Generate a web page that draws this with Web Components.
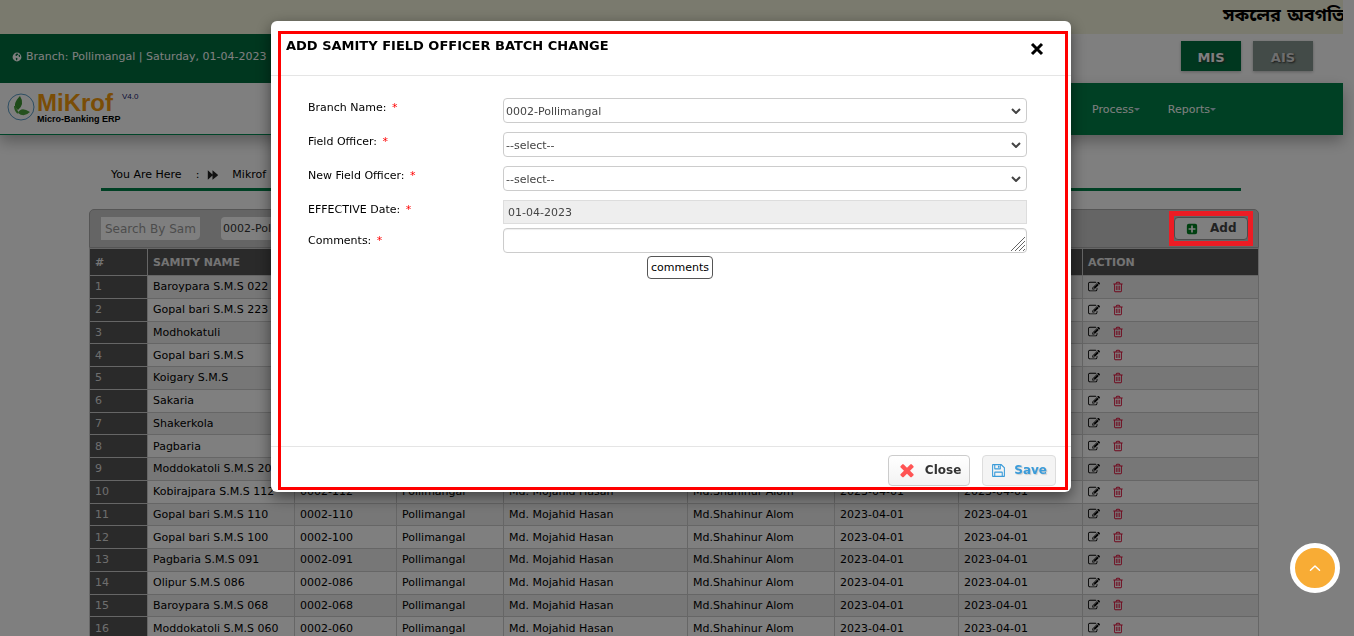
<!DOCTYPE html>
<html lang="en">
<head>
<meta charset="utf-8">
<title>MiKrof - Samity Field Officer Batch Change</title>
<style>
  html { overflow: hidden; }
  body { margin: 0; padding-right: 11px; background: #fff; color: #000;
    font: 11px/15px Verdana, "DejaVu Sans", sans-serif; }
</style>
</head>
<body>
<notice-bar>সকলের অবগতি</notice-bar>
<top-bar>Branch: Pollimangal | Saturday, 01-04-2023</top-bar>
<main-nav></main-nav>
<page-content>
  <bread-crumb slot="crumb">Mikrof</bread-crumb>
  <samity-panel></samity-panel>
</page-content>
<modal-layer>
  <modal-dialog heading="ADD SAMITY FIELD OFFICER BATCH CHANGE">
    <field-row label="Branch Name:" type="select" value="0002-Pollimangal"></field-row>
    <field-row label="Field Officer:" type="select" value="--select--"></field-row>
    <field-row label="New Field Officer:" type="select" value="--select--"></field-row>
    <field-row class="tight" label="EFFECTIVE Date:" type="date" value="01-04-2023"></field-row>
    <field-row class="area" label="Comments:" type="area" hint="comments"></field-row>
  </modal-dialog>
</modal-layer>
<scroll-top></scroll-top>

<script>
const define = (name, html, setup) => customElements.define(name, class extends HTMLElement {
  connectedCallback() {
    if (this.shadowRoot) return;
    const root = this.attachShadow({ mode: 'open' });
    root.innerHTML = typeof html === 'function' ? html(this) : html;
    if (setup) setup(root, this);
  }
});

const ICONS = {
  edit: '<path d="M888 1184l116-116-152-152-116 116v56h96v96h56zm440-720q-16-16-33 1l-350 350q-17 17-1 33t33-1l350-350q17-17 1-33zm80 594v190q0 119-84.5 203.5t-203.5 84.5h-832q-119 0-203.5-84.5t-84.5-203.5v-832q0-119 84.5-203.5t203.5-84.5h832q63 0 117 25 15 7 18 23 3 17-9 29l-49 49q-14 14-32 8-23-6-45-6h-832q-66 0-113 47t-47 113v832q0 66 47 113t113 47h832q66 0 113-47t47-113v-126q0-13 9-22l64-64q15-15 35-7t20 29zm-96-738l288 288-672 672h-288v-288zm444 132l-92 92-288-288 92-92q28-28 68-28t68 28l152 152q28 28 28 68t-28 68z"/>',
  trash: '<path d="M704 736v576q0 14-9 23t-23 9h-64q-14 0-23-9t-9-23v-576q0-14 9-23t23-9h64q14 0 23 9t9 23zm256 0v576q0 14-9 23t-23 9h-64q-14 0-23-9t-9-23v-576q0-14 9-23t23-9h64q14 0 23 9t9 23zm256 0v576q0 14-9 23t-23 9h-64q-14 0-23-9t-9-23v-576q0-14 9-23t23-9h64q14 0 23 9t9 23zm128 724v-948h-896v948q0 22 7 40.5t14.5 27 10.5 8.5h832q3 0 10.5-8.5t14.5-27 7-40.5zm-672-1076h448l-48-117q-7-9-17-11h-317q-10 2-17 11zm928 32v64q0 14-9 23t-23 9h-96v948q0 83-47 143.5t-113 60.5h-832q-66 0-113-58.5t-47-141.5v-952h-96q-14 0-23-9t-9-23v-64q0-14 9-23t23-9h309l70-167q15-37 54-63t79-26h320q40 0 79 26t54 63l70 167h309q14 0 23 9t9 23z"/>',
  times: '<path transform="translate(0 -90)" d="M1490 1322q0 40-28 68l-136 136q-28 28-68 28t-68-28l-294-294-294 294q-28 28-68 28t-68-28l-136-136q-28-28-28-68t28-68l294-294-294-294q-28-28-28-68t28-68l136-136q28-28 68-28t68 28l294 294 294-294q28-28 68-28t68 28l136 136q28 28 28 68t-28 68l-294 294 294 294q28 28 28 68z"/>',
  plus: '<path fill-rule="evenodd" d="M416 128h960q288 0 288 288v960q0 288-288 288H416q-288 0-288-288V416q0-288 288-288zM768 384v384H384v256h384v384h256v-384h384V768h-384V384z"/>',
  globe: '<circle cx="896" cy="896" r="790"/><path fill="#006e3e" d="M700 330l260-70 160 100-60 160-160 60-60 140-120-20-120-120zM1240 460l160 80 60 220-60 200-140-90-100-200zM660 1020l260 60 80 140-120 240-120 0-60-200z"/>',
  save: '<path fill-rule="evenodd" d="M224 128h1020l420 420v1020q0 96-96 96H224q-96 0-96-96V224q0-96 96-96zM256 256v1280h128v-416q0-96 96-96h832q96 0 96 96v416h128V608l-352-352v416q0 96-96 96H480q-96 0-96-96V256zM512 256v384h576V256zM512 1152v384h768v-384zM832 320h192v256H832z"/>',
  forward: '<path d="M120 200l700 620V200l800 640v112l-800 640V972l-700 620z"/>',
  up: '<path fill="none" stroke="currentColor" stroke-width="220" stroke-linecap="round" stroke-linejoin="round" d="M220 1240l676-640 676 640"/>'
};
define('ui-icon', el => `<style>
  :host { display: inline-block; width: 12px; height: 12px; flex: none; }
  svg { display: block; width: 100%; height: 100%; fill: currentColor; }
</style><svg viewBox="0 0 1792 1792" aria-hidden="true">${ICONS[el.getAttribute('name')]}</svg>`);

define('notice-bar', `<style>
  :host { display: flex; justify-content: flex-end; height: 34px; background: #f5f5dc; overflow: hidden; }
  p { margin: 0; width: 120px; white-space: nowrap; font: bold 18px/30px Verdana, "DejaVu Sans", "Noto Sans Bengali", sans-serif; }
</style><p><slot></slot></p>`);

define('top-bar', `<style>
  :host { display: flex; height: 49px; }
  .info { flex: 1; display: flex; align-items: center; gap: 4px; padding: 0 12px 4px; background: #006e3e; color: #fff; }
  ui-icon { width: 10px; height: 10px; }
  .modes { flex: 1; display: flex; justify-content: flex-end; gap: 12px; padding: 7px 30px 0 0; }
  button { width: 60px; height: 30px; border: 0; padding: 2px 0 0; background: #006e3e; color: #fff;
    font: bold 13px/15px Verdana, "DejaVu Sans", sans-serif; text-shadow: 1px 1px 2px #333; box-shadow: 0 1px 3px #bbb; }
  .off { background: #869790; color: #ddd; }
</style><div class="info"><ui-icon name="globe"></ui-icon><span><slot></slot></span></div>
<div class="modes"><button>MIS</button><button class="off">AIS</button></div>`);

define('main-nav', `<style>
  :host { display: flex; height: 52px; box-shadow: 0 6px 14px rgba(0,0,0,.3); }
  .brand { flex: 1; display: flex; padding: 8px 7px 0; border-bottom: 1px solid #008a52; background: #fff; }
  .brand svg { width: 28px; height: 30px; margin: 1px 2px 0 0; }
  .name { width: 79px; white-space: nowrap; font: bold 24px/24px "Liberation Sans", sans-serif; color: #f59a0c; }
  .name small { display: block; font-size: 9px; line-height: 9px; color: #000; }
  sup { margin-left: 6px; font: 8px/12px "Liberation Sans", sans-serif; color: #20206e; }
  nav { flex: 2; display: flex; justify-content: flex-end; align-items: center; gap: 28px; padding-right: 127px; background: #008148; }
  a { color: #fff; text-decoration: none; display: flex; align-items: center; }
  a::after { content: ""; border: 3px solid transparent; border-top-color: #b5d0e0; border-bottom: 0; }
</style>
<div class="brand">
  <svg viewBox="0 0 28 30"><circle cx="14" cy="15" r="13" fill="none" stroke="#5b9cc5"/>
    <path d="M13 4Q4 13 11 18Q18 12 13 4z" fill="#3d9432"/><path d="M11 21Q14 14 23 20Q17 26 11 21z" fill="#4ca33d"/><path d="M8 14Q8 18 11 21" fill="none" stroke="#4ca33d" stroke-width="2"/></svg>
  <div class="name">MiKrof<small>Micro-Banking ERP</small></div><sup>V4.0</sup>
</div>
<nav><a href="#process">Process</a><a href="#reports">Reports</a></nav>`);

define('page-content', `<style>
  :host { display: block; max-width: 1171px; margin: 0 auto; padding-top: 29px; }
</style><slot name="crumb"></slot><slot></slot>`);

define('bread-crumb', `<style>
  :host { display: flex; align-items: center; margin: 0 16px 18px 15px; padding: 0 10px 3px; height: 21px; border-bottom: 3px solid #008148; line-height: 21px; }
  .sep { margin: 0 8px 0 14px; }
  ui-icon { margin-right: 13px; color: #222; }
</style><span>You Are Here</span><span class="sep">:</span><ui-icon name="forward"></ui-icon><slot></slot>`);

const NAMES = ['Baroypara S.M.S 022','Gopal bari S.M.S 223','Modhokatuli','Gopal bari S.M.S','Koigary S.M.S','Sakaria','Shakerkola','Pagbaria','Moddokatoli S.M.S 201','Kobirajpara S.M.S 112','Gopal bari S.M.S 110','Gopal bari S.M.S 100','Pagbaria S.M.S 091','Olipur S.M.S 086','Baroypara S.M.S 068','Moddokatoli S.M.S 060'];
const CODES = ['022','223','222','221','220','219','218','217','201','112','110','100','091','086','068','060'];
const rowHtml = (name, i) => `<tr><th scope="row">${i + 1}</th><td>${name}</td><td>0002-${CODES[i]}</td><td>Pollimangal</td>
  <td>Md. Mojahid Hasan</td><td>Md.Shahinur Alom</td><td>2023-04-01</td><td>2023-04-01</td>
  <td><div class="act"><a href="#edit" aria-label="Edit"><ui-icon name="edit"></ui-icon></a><a class="del" href="#delete" aria-label="Delete"><ui-icon name="trash"></ui-icon></a></div></td></tr>`;

define('samity-panel', `<style>
  :host { display: block; margin: 0 -2px 0 3px; }
  .bar { display: flex; align-items: center; height: 37px; padding: 0 10px 0 11px; background: #cbcbcb; border: 1px solid #aaa; border-radius: 5px 5px 0 0; }
  input, select { box-sizing: border-box; height: 23px; border: 0; border-radius: 4px; background: #fff; font: 11px/15px Verdana, "DejaVu Sans", sans-serif; color: #333; }
  input { width: 99px; margin-right: 21px; padding: 0 4px; font-size: 12px; border-radius: 0 0 5px 0; }
  input::placeholder { color: #999; }
  select { width: 150px; padding: 0 2px; appearance: none; }
  add-button { margin-left: auto; }
  table { width: 100%; height: 392px; table-layout: fixed; border-collapse: collapse; border: 1px solid #ccc; }
  th, td { border: 1px solid #ccc; padding: 3px 5px; text-align: left; white-space: nowrap; font-weight: normal; }
  thead th { height: 20px; background: #545454; color: #e8e8e8; font-weight: bold; }
  tbody th { background: #545454; color: #ddd; }
  tbody tr:nth-child(odd) td { background: #efefef; }
  .act { display: flex; gap: 12px; height: 15px; align-items: center; }
  a { display: block; height: 12px; color: #000; } .del { color: #e0103a; }
</style>
<div class="bar"><input type="text" placeholder="Search By Samity" aria-label="Search By Samity"><select aria-label="Branch"><option>0002-Pollimangal</option></select><add-button></add-button></div>
<table><colgroup><col style="width:58px"><col style="width:147px"><col style="width:102px"><col style="width:107px"><col style="width:184px"><col style="width:147px"><col style="width:124px"><col style="width:124px"><col></colgroup>
<thead><tr><th>#</th><th>SAMITY NAME</th><th>CODE</th><th>BRANCH</th><th>FIELD OFFICER</th><th>NEW OFFICER</th><th>OPENING</th><th>EFFECTIVE DATE</th><th>ACTION</th></tr></thead>
<tbody>${NAMES.map(rowHtml).join('')}</tbody></table>`);

define('add-button', `<style>
  :host { display: block; position: relative; }
  button { display: flex; align-items: center; gap: 12px; height: 23px; width: 74px; padding: 0 0 0 11px; border: 1px solid #999; border-radius: 4px; background: #fff;
    font: bold 12px/15px Verdana, "DejaVu Sans", sans-serif; color: #444; }
  ui-icon { color: #008020; }
  .mark { position: absolute; inset: -6px -5px; border: 5px solid #ed1c24; z-index: 5; pointer-events: none; }
</style><button><ui-icon name="plus"></ui-icon>Add</button><div class="mark"></div>`);

define('modal-layer', `<style>
  :host { position: fixed; inset: 0; z-index: 3; display: flex; justify-content: center; align-items: flex-start;
    padding: 21px 12px 0 0; background: rgba(0,0,0,.5); }
</style><slot></slot>`);

define('modal-dialog', el => `<style>
  :host { display: block; position: relative; width: 800px; background: #fff; border-radius: 6px; box-shadow: 0 5px 15px rgba(0,0,0,.5); }
  header { display: flex; justify-content: space-between; align-items: flex-start; padding: 16px 27px 15px 15px; border-bottom: 1px solid #e5e5e5; }
  h2 { margin: 0; font-size: 13px; line-height: 18px; }
  button { font: bold 12px/15px Verdana, "DejaVu Sans", sans-serif; }
  .x { display: block; margin-top: 5px; padding: 0; border: 0; background: none; width: 14px; height: 18px; color: #000; }
  section { min-height: 348px; padding: 22px 44px 0 37px; }
  footer { display: flex; justify-content: flex-end; gap: 12px; padding: 8px 15px 6px; border-top: 1px solid #e5e5e5; }
  footer button { display: flex; align-items: center; justify-content: center; gap: 8px; height: 31px; padding: 0 8px; border: 1px solid #ccc; border-radius: 4px;
    background: linear-gradient(#fff, #f3f3f3); color: #333; }
  .close { color: #ff5454; width: 20px; height: 20px; }
  .save ui-icon { width: 15px; height: 15px; }
  footer .save { color: #3a9bd9; background: #f4f4f4; border-color: #ddd; text-shadow: 1px 1px 1px #ccc; }
  .mark { position: absolute; inset: 10px 3px 2px 7px; border: 3px solid #f00; pointer-events: none; }
</style>
<header><h2>${el.getAttribute('heading')}</h2><button class="x" aria-label="Dismiss"><svg width="14" height="14" viewBox="0 0 14 14" aria-hidden="true"><path d="M2 2l10 10M12 2L2 12" stroke="#000" stroke-width="3"/></svg></button></header>
<section><slot></slot></section>
<footer><button><ui-icon class="close" name="times"></ui-icon>Close</button><button class="save"><ui-icon name="save"></ui-icon>Save</button></footer>
<div class="mark"></div>`, (root, el) => { el.setAttribute('role', 'dialog'); });

define('field-row', el => {
  const v = el.getAttribute('value') || '';
  const control = {
    select: `<select id="c"><option>${v}</option></select><svg class="chev" width="10" height="6" viewBox="0 0 10 6" aria-hidden="true"><path d="M1 1l4 4 4-4" fill="none" stroke="#444" stroke-width="2"/></svg>`,
    date: `<input id="c" type="text" readonly value="${v}">`,
    area: `<textarea id="c"></textarea><svg class="grip" width="14" height="14" viewBox="0 0 14 14" aria-hidden="true"><path d="M0 14L14 0M4 14L14 4M8 14l6-6M12 14l2-2" stroke="#666"/></svg>`
  }[el.getAttribute('type')];
  const hint = el.getAttribute('hint');
  return `<style>
  :host { display: grid; grid-template-columns: 195px 1fr; align-items: start; margin-bottom: 9px; }
  :host(.tight) { margin-bottom: 4px; }
  :host(.area) label { line-height: 26px; }
  label { line-height: 20px; } i { font-style: normal; color: #f00; margin-left: 2px; }
  .box { position: relative; display: grid; }
  select, input, textarea { box-sizing: border-box; width: 100%; height: 25px; margin: 0; border: 1px solid #ccc; border-radius: 4px;
    background: #fff; color: #444; font: 11px/15px Verdana, "DejaVu Sans", sans-serif; resize: none; outline: 0; overflow: hidden; }
  select { padding: 1px 2px 0; appearance: none; }
  input { height: 24px; padding: 0 4px; border-radius: 0; border-color: #ddd; background: #eee; }
  textarea { box-shadow: inset 0 1px 1px #eee; }
  .chev { position: absolute; right: 6px; top: 10px; pointer-events: none; }
  .grip { position: absolute; right: 2px; bottom: 2px; pointer-events: none; }
  .tip { position: absolute; top: 28px; left: 144px; padding: 3px; border: 1px solid #555; border-radius: 4px; background: #fff; }
</style><label for="c">${el.getAttribute('label')} <i>*</i></label><div class="box">${control}${hint ? `<span class="tip" role="tooltip">${hint}</span>` : ''}</div>`;
});

define('scroll-top', `<style>
  :host { position: fixed; right: 14px; bottom: 43px; z-index: 6; }
  button { display: grid; place-items: center; width: 50px; height: 50px; padding: 0; border: 5px solid #fff; border-radius: 50%; background: #f8ac35; color: #fff; }
</style><button aria-label="Back to top"><ui-icon name="up"></ui-icon></button>`);
</script>
</body>
</html>
